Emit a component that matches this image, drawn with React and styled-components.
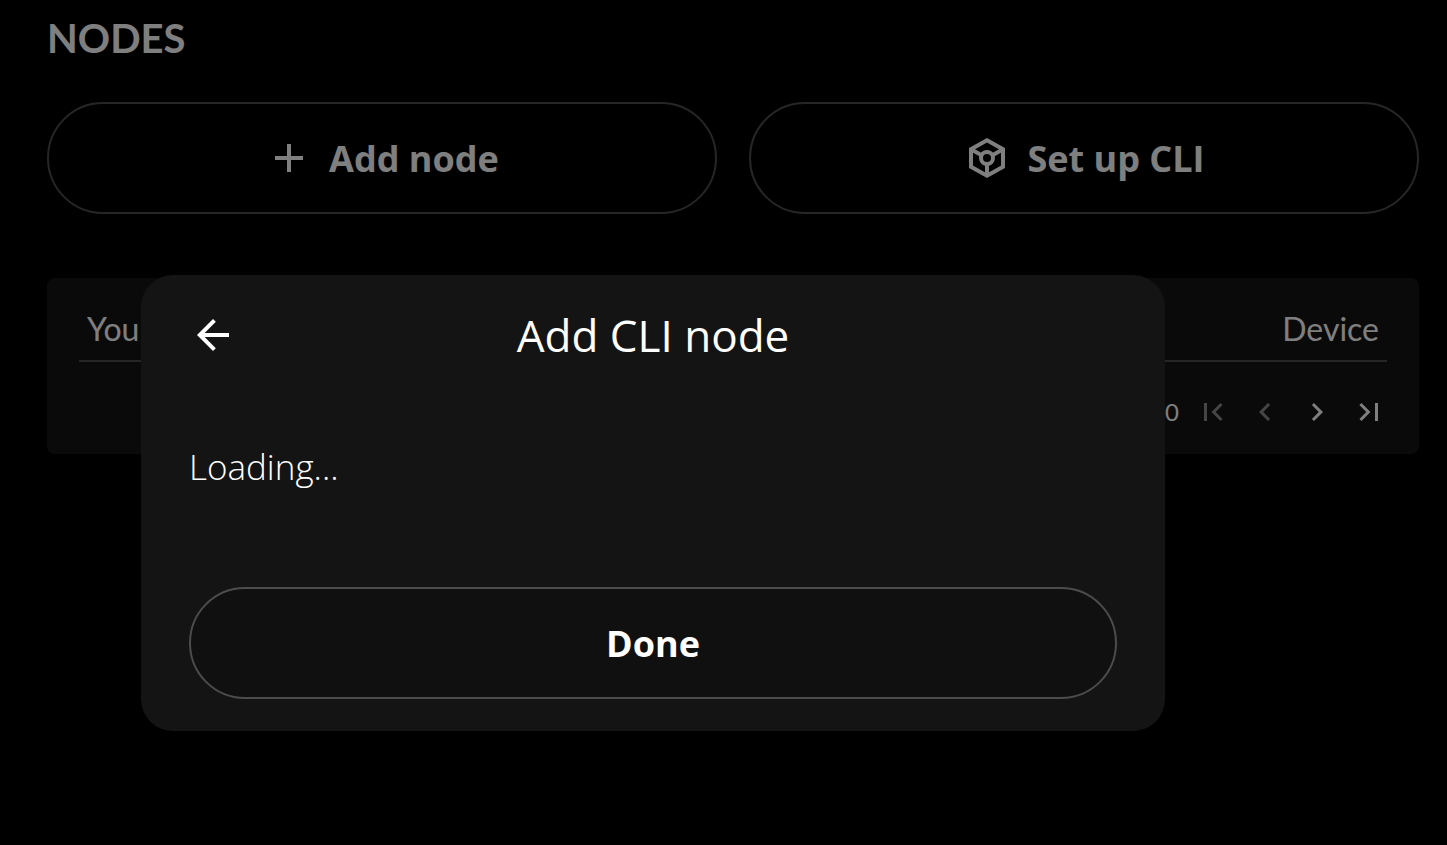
import React from "react";
import styled, { createGlobalStyle } from "styled-components";
import {
  MdAdd,
  MdArrowBack,
  MdChevronLeft,
  MdChevronRight,
  MdFirstPage,
  MdLastPage,
} from "react-icons/md";

const CubeIcon = () => (
  <svg viewBox="0 0 24 24" fill="none" stroke="currentColor" strokeWidth="2" aria-hidden="true">
    <path d="M12 3.15 20 7.6v8.8l-8 4.45-8-4.45V7.6z" />
    <circle cx="12" cy="12" r="3" />
    <path d="M4 7.6 9.5 10.7M20 7.6l-5.5 3.1M12 15v6" />
  </svg>
);

const App = () => {
  return (
    <>
      <GlobalStyle />
      <Page>
        <Heading>NODES</Heading>
        <Actions>
          <PillButton>
            <MdAdd />
            Add node
          </PillButton>
          <PillButton>
            <CubeIcon />
            Set up CLI
          </PillButton>
        </Actions>
        <Card>
          <Table>
            <thead>
              <tr>
                <th scope="col">You</th>
                <th scope="col">Device</th>
              </tr>
            </thead>
          </Table>
          <Pagination>
            <span>0</span>
            <PageButton aria-label="First page" disabled>
              <MdFirstPage />
            </PageButton>
            <PageButton aria-label="Previous page" disabled>
              <MdChevronLeft />
            </PageButton>
            <PageButton aria-label="Next page">
              <MdChevronRight />
            </PageButton>
            <PageButton aria-label="Last page">
              <MdLastPage />
            </PageButton>
          </Pagination>
        </Card>
      </Page>
      <Overlay>
        <Dialog role="dialog" aria-modal="true" aria-labelledby="dialog-title">
          <DialogHeader>
            <BackButton aria-label="Back">
              <MdArrowBack />
            </BackButton>
            <h2 id="dialog-title">Add CLI node</h2>
          </DialogHeader>
          <DialogBody>Loading...</DialogBody>
          <PillButton $filled>Done</PillButton>
        </Dialog>
      </Overlay>
    </>
  );
};

const GlobalStyle = createGlobalStyle`
  * {
    margin: 0;
    padding: 0;
    box-sizing: border-box;
  }
  body {
    background: #000;
    color: #fff;
    font-family: Lato, sans-serif;
  }
  button {
    border: none;
    background: none;
    color: inherit;
    cursor: pointer;
  }
  svg {
    display: block;
  }
`;

const Page = styled.main`
  padding: 14px 28px 32px 47px;
`;

const Heading = styled.h1`
  font-size: 40px;
  font-weight: 700;
  line-height: 48px;
`;

const Actions = styled.div`
  display: grid;
  grid-template-columns: 1fr 1fr;
  gap: 32px;
  margin: 40px 0 64px;
`;

const PillButton = styled.button`
  display: flex;
  align-items: center;
  justify-content: center;
  gap: 16px;
  width: 100%;
  height: 112px;
  && {
    border: 2px solid #4c4c4c;
    background: ${({ $filled }) => ($filled ? "#101010" : "transparent")};
  }
  border-radius: 56px;
  font-family: "Open Sans", sans-serif;
  font-size: 36px;
  font-weight: 700;
  svg {
    width: 48px;
    height: 48px;
  }
`;

const Card = styled.section`
  padding: 32px 32px 24px;
  border-radius: 8px;
  background: #141414;
`;

const Table = styled.table`
  width: 100%;
  border-collapse: collapse;
  th {
    padding: 0 8px 12px;
    border-bottom: 2px solid #4c4c4c;
    font-size: 32px;
    font-weight: 400;
    line-height: 38px;
    text-align: left;
  }
  th:last-child {
    text-align: right;
  }
`;

const Pagination = styled.div`
  display: flex;
  align-items: center;
  justify-content: flex-end;
  gap: 16px;
  margin-top: 32px;
  font-size: 24px;
  line-height: 36px;
`;

const PageButton = styled.button`
  svg {
    width: 36px;
    height: 36px;
  }
  &:disabled {
    opacity: 0.5;
    cursor: default;
  }
`;

const Overlay = styled.div`
  position: fixed;
  inset: 0;
  display: flex;
  align-items: center;
  justify-content: center;
  padding: 161px 141px 0 0;
  background: rgba(0, 0, 0, 0.5);
`;

const Dialog = styled.div`
  width: 100%;
  max-width: 1024px;
  padding: 36px 48px 32px;
  border-radius: 32px;
  background: #141414;
  font-family: "Open Sans", sans-serif;
`;

const DialogHeader = styled.header`
  display: grid;
  grid-template-columns: 48px 1fr 48px;
  align-items: center;
  h2 {
    font-size: 44px;
    font-weight: 400;
    line-height: 48px;
    text-align: center;
  }
`;

const BackButton = styled.button`
  svg {
    width: 48px;
    height: 48px;
  }
`;

const DialogBody = styled.p`
  padding: 84px 0 96px;
  font-size: 35px;
  font-weight: 300;
  line-height: 48px;
`;

export default App;
